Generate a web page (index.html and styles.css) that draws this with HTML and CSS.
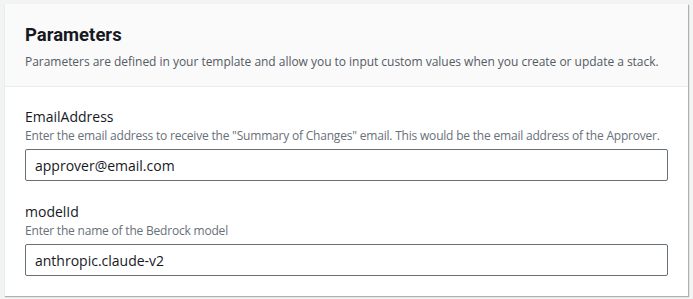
FILE: index.html
```html
<!DOCTYPE html>
<html>
<head>
    <title>Parameters</title>
    <link rel="stylesheet" href="styles.css">
</head>
<body>
    <div class="container">
        <!--header-->
        <div class="container-header">
            <h2>Parameters</h2>
            <p class="header-desc">Parameters are defined in your template and allow you to input custom values when you create or update a stack.</p>
        </div>
        <!--fields-->
        <div class="container-body">
            <div class="field">
                <label class="field-label">EmailAddress</label>
                <div class="field-desc">Enter the email address to receive the "Summary of Changes" email. This would be the email address of the Approver.</div>
                <input class="field-input" type="text" value="approver@email.com">
            </div>
            <div class="field">
                <label class="field-label">modelId</label>
                <div class="field-desc">Enter the name of the Bedrock model</div>
                <input class="field-input" type="text" value="anthropic.claude-v2">
            </div>
        </div>
    </div>
</body>
</html>
```

FILE: styles.css
```css
/* page */
body {
    background-color: #f2f3f3;
    font-family: 'Open Sans', sans-serif;
    margin: 0;
    padding: 4px 5px 4px 4px;
    color: #16191f;
}

.container {
    background-color: #ffffff;
    border-left: 1px solid #eaeded;
    box-shadow: 1px 1px 1px rgba(0, 28, 36, 0.3);
}

.container-header {
    background-color: #fafafa;
    border-bottom: 1px solid #eaeded;
    padding: 19px 20px 15px;
}

h2 {
    font-family: Roboto, sans-serif;
    font-size: 18.5px;
    font-weight: 700;
    margin: 0;
    line-height: 24px;
}

.header-desc {
    font-size: 12px;
    color: #545b64;
    margin: 6px 0 0;
    line-height: 18px;
    letter-spacing: -0.03px;
}

.container-body {
    padding: 20px 20px 20px;
    display: flex;
    flex-direction: column;
    gap: 21px;
}

.field {
    display: flex;
    flex-direction: column;
}

.field-label {
    font-size: 14px;
    line-height: 20px;
}

.field-desc {
    font-size: 12px;
    line-height: 18px;
    color: #687078;
    letter-spacing: -0.2px;
    white-space: nowrap;
    margin-bottom: 4px;
}

.field-input {
    font-family: 'Open Sans', sans-serif;
    font-size: 14px;
    color: #16191f;
    height: 32px;
    box-sizing: border-box;
    border: 1px solid #687078;
    border-radius: 2px;
    padding: 4px 9px;
    margin: 0;
}
```
